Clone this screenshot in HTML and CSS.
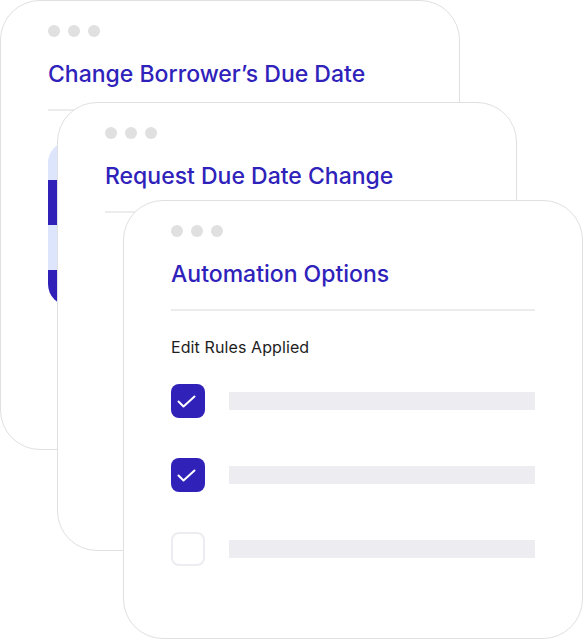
FILE: index.html
```
<!DOCTYPE html>
<html lang="en">
<head>
<meta charset="utf-8">
<title>Automation Options</title>
<link rel="stylesheet" href="styles.css">
</head>
<body>
<div class="stage">
  <section class="card card-back">
    <div class="dots"><span></span><span></span><span></span></div>
    <h2 class="title">Change Borrower’s Due Date</h2>
    <hr class="divider">
    <div class="calendar">
      <div class="band light first"></div>
      <div class="band dark"></div>
      <div class="band light"></div>
      <div class="band dark"></div>
    </div>
  </section>

  <section class="card card-mid">
    <div class="dots"><span></span><span></span><span></span></div>
    <h2 class="title">Request Due Date Change</h2>
    <hr class="divider">
  </section>

  <section class="card card-front">
    <div class="dots"><span></span><span></span><span></span></div>
    <h2 class="title">Automation Options</h2>
    <hr class="divider">
    <p class="label">Edit Rules Applied</p>
    <ul class="rules">
      <li class="rule">
        <span class="check on">
          <svg viewBox="0 0 34 34" width="34" height="34"><path d="M7.5 17.5 L12.5 22.5 L23.5 12.5" fill="none" stroke="#fff" stroke-width="2" stroke-linecap="round" stroke-linejoin="round"/></svg>
        </span>
        <span class="bar"></span>
      </li>
      <li class="rule">
        <span class="check on">
          <svg viewBox="0 0 34 34" width="34" height="34"><path d="M7.5 17.5 L12.5 22.5 L23.5 12.5" fill="none" stroke="#fff" stroke-width="2" stroke-linecap="round" stroke-linejoin="round"/></svg>
        </span>
        <span class="bar"></span>
      </li>
      <li class="rule">
        <span class="check off"></span>
        <span class="bar"></span>
      </li>
    </ul>
  </section>
</div>
</body>
</html>
```

FILE: styles.css
```
* { box-sizing: border-box; }

html, body {
  margin: 0;
  padding: 0;
  background: #ffffff;
}

body {
  font-family: Inter, "Noto Sans", "Liberation Sans", sans-serif;
  width: 583px;
  height: 639px;
  overflow: hidden;
}

.stage {
  position: relative;
  width: 583px;
  height: 639px;
}

.card {
  position: absolute;
  background: #ffffff;
  border: 1px solid #e0e0e0;
  border-radius: 40px;
  padding: 24px 47px 0 47px;
  overflow: hidden;
}

.card-back {
  left: 0;
  top: 0;
  width: 460px;
  height: 450px;
}

.card-mid {
  left: 57px;
  top: 102px;
  width: 460px;
  height: 449px;
}

.card-front {
  left: 123px;
  top: 200px;
  width: 460px;
  height: 439px;
}

.dots {
  display: flex;
  gap: 8px;
  height: 12px;
}

.dots span {
  width: 12px;
  height: 12px;
  border-radius: 50%;
  background: #e0e0e0;
}

.title {
  margin: 23px 0 0 0;
  font-size: 23px;
  line-height: 28px;
  font-weight: 500;
  color: #2f22bb;
  letter-spacing: 0;
  white-space: nowrap;
}

.divider {
  margin: 21px 0 0 0;
  border: 0;
  height: 2px;
  background: #ececec;
}

.calendar {
  margin-top: 30px;
  width: 200px;
  height: 165px;
  border-radius: 22px;
  overflow: hidden;
  display: flex;
  flex-direction: column;
}

.band { flex: none; }
.band.light { background: #dce5fc; height: 45px; }
.band.light.first { height: 39px; }
.band.dark { background: #3022b9; height: 45px; }
.band.dark:last-child { flex: 1; }

.label {
  margin: 26px 0 0 0;
  font-size: 16px;
  line-height: 20px;
  font-weight: 400;
  color: #1e1e1e;
  letter-spacing: 0.1px;
}

.rules {
  list-style: none;
  margin: 27px 0 0 0;
  padding: 0;
  display: flex;
  flex-direction: column;
  gap: 40px;
}

.rule {
  display: flex;
  align-items: center;
  gap: 24px;
  height: 34px;
}

.check {
  flex: none;
  width: 34px;
  height: 34px;
  border-radius: 8px;
  display: flex;
}

.check.on { background: #3022b9; }

.check.off {
  border: 2px solid #ececf1;
  background: #fff;
}

.bar {
  flex: 1;
  height: 18px;
  background: #ececf1;
}
```
